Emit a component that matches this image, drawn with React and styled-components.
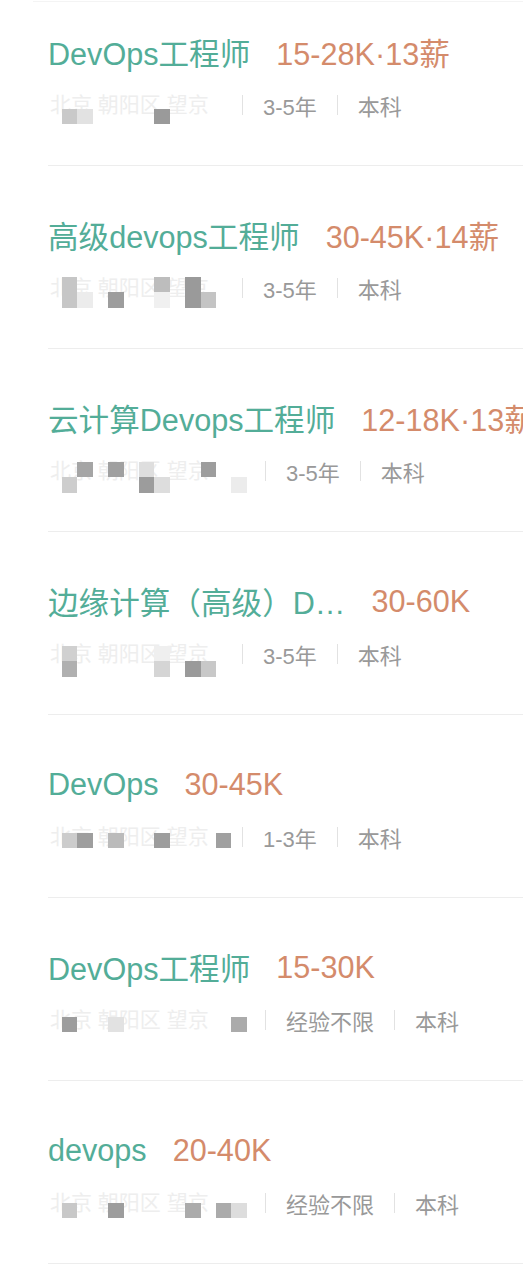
import React from "react";
import styled, { createGlobalStyle } from "styled-components";

const GlobalStyle = createGlobalStyle`
  html, body {
    margin: 0;
    padding: 0;
    background: #fff;
  }
  body {
    font-family: "Liberation Sans", "Noto Sans CJK SC", sans-serif;
  }
`;

const Page = styled.div`
  width: 523px;
  background: #fff;
  overflow: hidden;
`;

const TopRule = styled.div`
  height: 1px;
  margin: 1px 0 0 33px;
  background: #f4f4f4;
`;

const List = styled.ul`
  list-style: none;
  margin: 0;
  padding: 0 0 0 48px;
`;

const Item = styled.li`
  padding: 49px 0 45px;
  border-bottom: 1px solid #ededed;

  &:first-child {
    padding-top: 30px;
  }
`;

const TitleRow = styled.div`
  display: flex;
  align-items: center;
  height: 40px;
  margin-bottom: 18px;
  font-size: 30.6px;
  white-space: nowrap;
`;

const JobName = styled.span`
  color: #53ad98;
`;

const Salary = styled.span`
  color: #d48b6b;
  margin-left: 26px;
`;

const Meta = styled.div`
  display: flex;
  align-items: center;
  height: 30px;
  font-size: 22px;
  color: #999;
  white-space: nowrap;
`;

const Location = styled.div`
  position: relative;
  width: ${(p) => p.$width}px;
  height: 30px;
  flex-shrink: 0;
`;

const FaintText = styled.div`
  height: 30px;
  line-height: 30px;
  overflow: hidden;
  color: #eeeeee;
  font-size: 21px;
  padding-left: 2px;
`;

const Mosaic = styled.div`
  position: absolute;
  left: 14px;
  top: ${(p) => p.$top}px;
  display: grid;
  grid-template-columns: repeat(13, 15.4px);
  grid-auto-rows: 15.4px;
`;

const Cell = styled.span`
  grid-column: ${(p) => p.$col + 1};
  grid-row: ${(p) => p.$row + 1};
  background: ${(p) => p.$shade};
`;

const Sep = styled.span`
  width: 1px;
  height: 20px;
  margin: 0 20px;
  background: #e2e2e2;
`;

const jobs = [
  {
    name: "DevOps工程师",
    salary: "15-28K·13薪",
    loc: 174,
    exp: "3-5年",
    top: 19,
    cells: [
      [0, 0, "#c9c9c9"],
      [1, 0, "#e2e2e2"],
      [6, 0, "#9a9a9a"],
    ],
  },
  {
    name: "高级devops工程师",
    salary: "30-45K·14薪",
    loc: 174,
    exp: "3-5年",
    top: 4,
    cells: [
      [0, 0, "#c6c6c6"],
      [6, 0, "#bdbdbd"],
      [8, 0, "#9a9a9a"],
      [0, 1, "#c6c6c6"],
      [1, 1, "#ececec"],
      [3, 1, "#9d9d9d"],
      [6, 1, "#f0f0f0"],
      [8, 1, "#9a9a9a"],
      [9, 1, "#c4c4c4"],
    ],
  },
  {
    name: "云计算Devops工程师",
    salary: "12-18K·13薪",
    loc: 197,
    exp: "3-5年",
    top: 6,
    cells: [
      [1, 0, "#a5a5a5"],
      [3, 0, "#a0a0a0"],
      [5, 0, "#dedede"],
      [9, 0, "#9d9d9d"],
      [0, 1, "#cdcdcd"],
      [5, 1, "#9c9c9c"],
      [6, 1, "#dddddd"],
      [11, 1, "#ececec"],
    ],
  },
  {
    name: "边缘计算（高级）D…",
    salary: "30-60K",
    loc: 174,
    exp: "3-5年",
    top: 7,
    cells: [
      [0, 0, "#d0d0d0"],
      [6, 0, "#efefef"],
      [0, 1, "#b0b0b0"],
      [6, 1, "#d5d5d5"],
      [8, 1, "#9a9a9a"],
      [9, 1, "#c8c8c8"],
    ],
  },
  {
    name: "DevOps",
    salary: "30-45K",
    loc: 174,
    exp: "1-3年",
    top: 11,
    cells: [
      [0, 0, "#cccccc"],
      [1, 0, "#9e9e9e"],
      [3, 0, "#bbbbbb"],
      [6, 0, "#9d9d9d"],
      [10, 0, "#a0a0a0"],
    ],
  },
  {
    name: "DevOps工程师",
    salary: "15-30K",
    loc: 197,
    exp: "经验不限",
    top: 12,
    cells: [
      [0, 0, "#9d9d9d"],
      [3, 0, "#e2e2e2"],
      [11, 0, "#ababab"],
    ],
  },
  {
    name: "devops",
    salary: "20-40K",
    loc: 197,
    exp: "经验不限",
    top: 15,
    cells: [
      [0, 0, "#c8c8c8"],
      [3, 0, "#9d9d9d"],
      [8, 0, "#ababab"],
      [10, 0, "#ababab"],
      [11, 0, "#dddddd"],
    ],
  },
];

const JobItem = ({ job }) => (
  <Item>
    <TitleRow>
      <JobName>{job.name}</JobName>
      <Salary>{job.salary}</Salary>
    </TitleRow>
    <Meta>
      <Location $width={job.loc}>
        <FaintText>北京 朝阳区 望京</FaintText>
        <Mosaic $top={job.top}>
          {job.cells.map(([col, row, shade], i) => (
            <Cell key={i} $col={col} $row={row} $shade={shade} />
          ))}
        </Mosaic>
      </Location>
      <Sep />
      <span>{job.exp}</span>
      <Sep />
      <span>本科</span>
    </Meta>
  </Item>
);

const App = () => (
  <Page>
    <GlobalStyle />
    <TopRule />
    <List>
      {jobs.map((job, i) => (
        <JobItem key={i} job={job} />
      ))}
    </List>
  </Page>
);

export default App;
